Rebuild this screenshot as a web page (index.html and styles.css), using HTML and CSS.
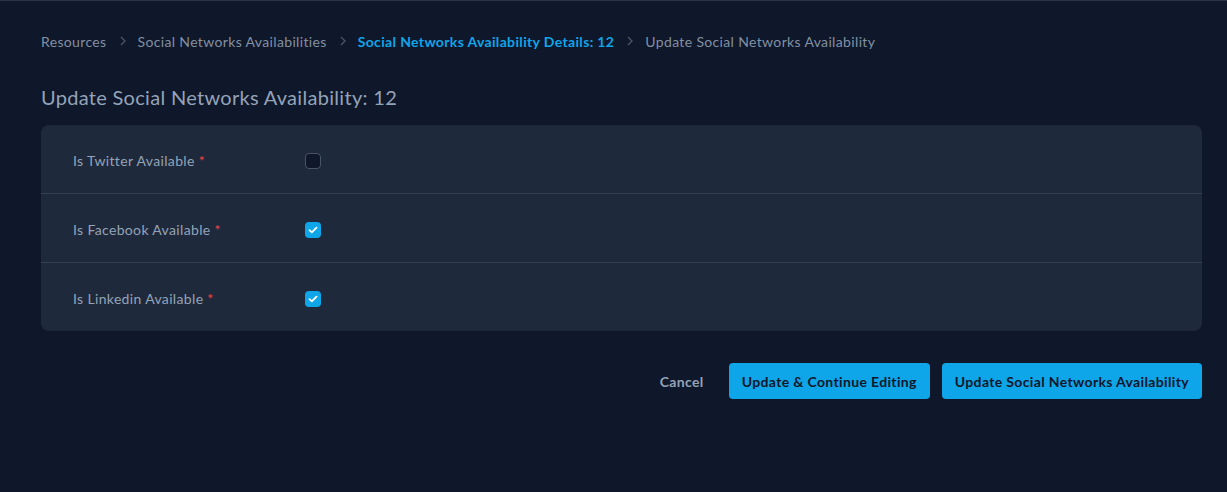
FILE: index.html
```html
<!DOCTYPE html>
<html lang="en">

<head>
  <meta charset="UTF-8">
  <meta name="viewport" content="width=device-width, initial-scale=1.0">
  <title>Update Social Networks Availability</title>
  <link rel="stylesheet" href="styles.css">
</head>

<body>

  <div class="topline"></div>

  <main class="content">

    <nav class="crumbs">
      <a href="#" class="crumb">Resources</a>
      <span class="chev"><svg width="8" height="12" viewBox="0 0 8 12"><path d="M2 2l4 4-4 4" fill="none" stroke="currentColor" stroke-width="1.3"/></svg></span>
      <a href="#" class="crumb">Social Networks Availabilities</a>
      <span class="chev"><svg width="8" height="12" viewBox="0 0 8 12"><path d="M2 2l4 4-4 4" fill="none" stroke="currentColor" stroke-width="1.3"/></svg></span>
      <a href="#" class="crumb active">Social Networks Availability Details: 12</a>
      <span class="chev"><svg width="8" height="12" viewBox="0 0 8 12"><path d="M2 2l4 4-4 4" fill="none" stroke="currentColor" stroke-width="1.3"/></svg></span>
      <span class="crumb">Update Social Networks Availability</span>
    </nav>

    <h1 class="title">Update Social Networks Availability: 12</h1>

    <form class="card">
      <div class="row">
        <label class="label">Is Twitter Available <span class="req">*</span></label>
        <div class="field"><span class="check"></span></div>
      </div>
      <div class="row">
        <label class="label">Is Facebook Available <span class="req">*</span></label>
        <div class="field"><span class="check on"><svg width="10" height="8" viewBox="0 0 10 8"><path d="M1.5 4.2l2.3 2.2L8.5 1.6" fill="none" stroke="#fff" stroke-width="1.8" stroke-linecap="round" stroke-linejoin="round"/></svg></span></div>
      </div>
      <div class="row">
        <label class="label">Is Linkedin Available <span class="req">*</span></label>
        <div class="field"><span class="check on"><svg width="10" height="8" viewBox="0 0 10 8"><path d="M1.5 4.2l2.3 2.2L8.5 1.6" fill="none" stroke="#fff" stroke-width="1.8" stroke-linecap="round" stroke-linejoin="round"/></svg></span></div>
      </div>
    </form>

    <div class="actions">
      <button class="btn-link">Cancel</button>
      <button class="btn">Update &amp; Continue Editing</button>
      <button class="btn">Update Social Networks Availability</button>
    </div>

  </main>

</body>

</html>
```

FILE: styles.css
```css
* {
  box-sizing: border-box;
}
body {
  margin: 0;
  background-color: #0f172a;
  font-family: "Lato", "Noto Sans", sans-serif;
  font-size: 14px;
  letter-spacing: 0.35px;
  color: #94a3b8;
  height: 492px;
}
.topline {
  height: 1px;
  background-color: #2a3548;
}
.content {
  padding: 0 25px 0 41px;
}
.crumbs {
  display: flex;
  align-items: center;
  height: 20px;
  margin-top: 30px;
}
.crumb {
  color: #8290a3;
  text-decoration: none;
}
.crumb.active {
  color: #0ea5e9;
  font-weight: 700;
}
.chev {
  display: flex;
  color: #4b5567;
  margin: 0 11px 0 12px;
}
.title {
  margin: 32px 0 0;
  font-size: 20px;
  font-weight: 400;
  line-height: 28px;
  letter-spacing: 0.3px;
  color: #94a3b8;
}
.card {
  margin-top: 14px;
  background-color: #1e293b;
  border-radius: 8px;
}
.row {
  display: flex;
  align-items: center;
  height: 69px;
  padding-top: 3px;
  border-top: 1px solid #334155;
}
.row:first-child {
  border-top: 0;
  height: 68px;
}
.label {
  width: 20%;
  padding: 0 32px;
  color: #94a3b8;
  line-height: 20px;
}
.req {
  color: #ef4444;
}
.field {
  display: flex;
  padding: 0 32px;
}
.check {
  width: 16px;
  height: 16px;
  border-radius: 4px;
  border: 1px solid #475569;
  background-color: #0f172a;
  display: flex;
  align-items: center;
  justify-content: center;
}
.check.on {
  border: 0;
  background-color: #0ea5e9;
}
.actions {
  display: flex;
  justify-content: flex-end;
  align-items: center;
  gap: 12px;
  margin-top: 32px;
}
.btn-link, .btn {
  font-family: inherit;
  font-size: 14px;
  font-weight: 700;
  letter-spacing: 0.35px;
  border: 0;
  height: 36px;
  border-radius: 4px;
  cursor: pointer;
}
.btn-link {
  background: none;
  color: #94a3b8;
  padding: 0 12px;
  margin-right: 1px;
}
.btn {
  background-color: #0ea5e9;
  color: #0f172a;
  padding: 0 13px;
}
```
